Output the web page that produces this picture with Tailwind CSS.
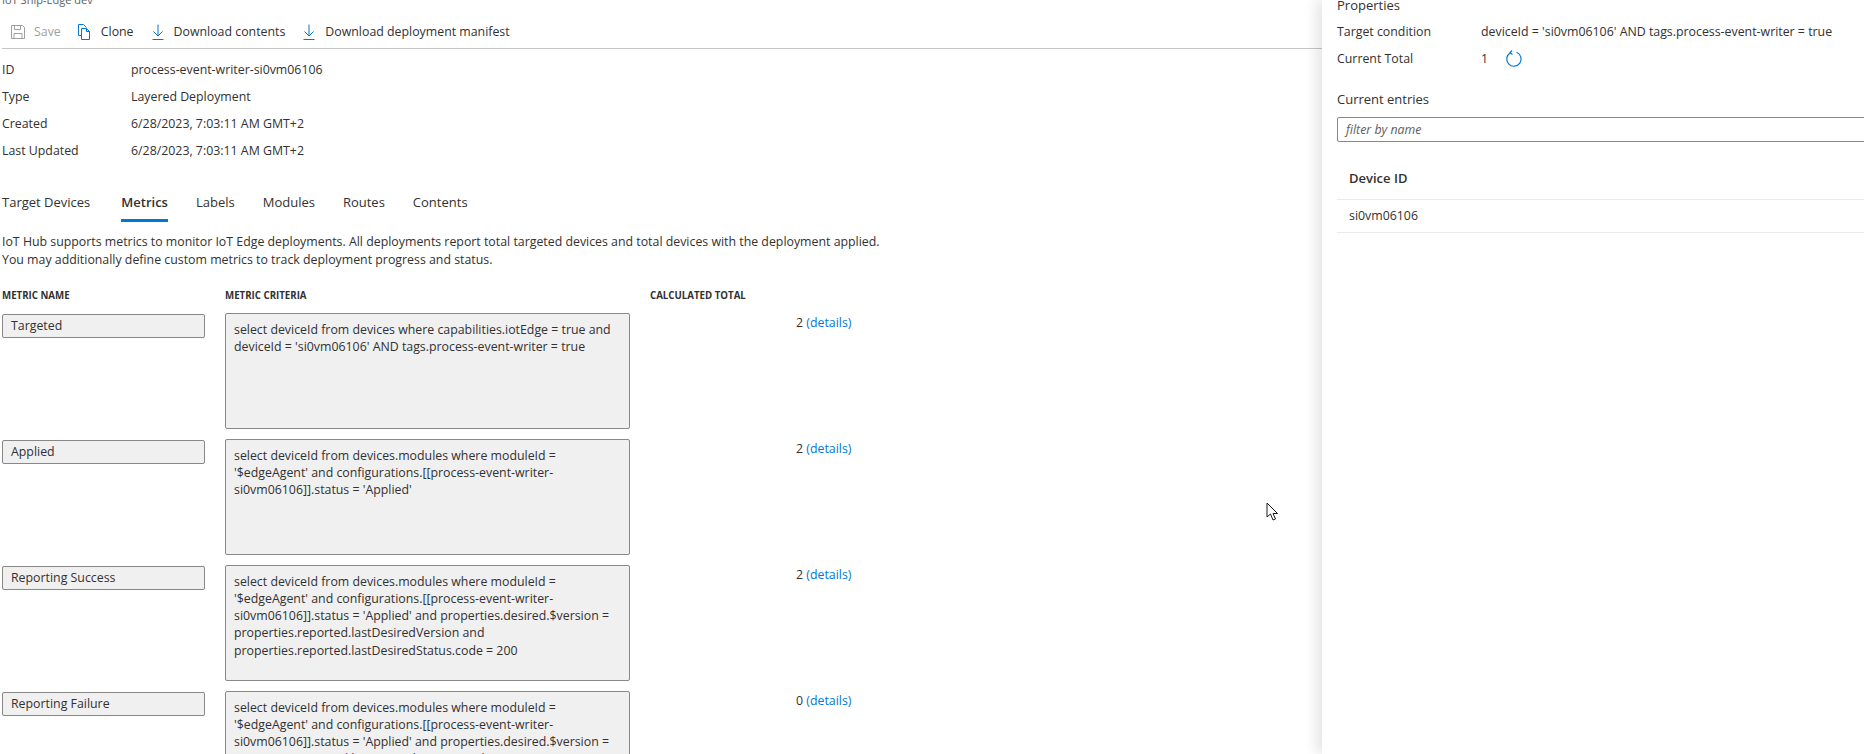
<!DOCTYPE html>
<html>
<head>
<meta charset="UTF-8">
<script src="https://cdn.jsdelivr.net/npm/@tailwindcss/browser@4"></script>
</head>
<body class="h-screen overflow-hidden bg-white text-[#323130] text-[12.35px] font-['Open_Sans','Noto_Sans',sans-serif]">
<div class="relative flex h-[754px] overflow-hidden">
  <!-- main blade -->
  <main class="w-[1322px] shrink-0">
    <div class="h-[12px] overflow-hidden pl-[2px] text-[11px] leading-[0px] text-[#605e5c]">IoT Ship-Edge dev</div>
    <!-- toolbar -->
    <div class="ml-[2px] flex h-[37px] items-center gap-[16px] border-b border-[#c8c6c4] pt-[5px]">
      <button class="flex items-center gap-[8px] pl-[8px] text-[#a19f9d]">
        <svg width="16" height="16" viewBox="0 0 16 16" fill="none" stroke="#a19f9d"><path d="M1.5 1.5h11l2 2v11h-13z"/><path d="M4.5 1.5v4h6v-4M4 14.5v-5h8v5"/></svg>
        Save
      </button>
      <button class="flex items-center gap-[8px]">
        <svg width="16" height="16" viewBox="0 0 16 16" fill="none" stroke="#0078d4"><path d="M1.5.5h5l3 3M1.5.5v11h3"/><path d="M4.5 4.5h5l3 3v8h-8zM9.5 4.5v3h3"/></svg>
        Clone
      </button>
      <button class="flex items-center gap-[8px]">
        <svg width="16" height="16" viewBox="0 0 16 16" fill="none" stroke="#0078d4"><path d="M8 .5v11M3.5 7.5 8 12l4.500-4.500M2.500 15.500h11"/></svg>
        Download contents
      </button>
      <button class="flex items-center gap-[8px]">
        <svg width="16" height="16" viewBox="0 0 16 16" fill="none" stroke="#0078d4"><path d="M8 .5v11M3.500 7.500 8 12l4.500-4.500M2.500 15.500h11"/></svg>
        Download deployment manifest
      </button>
    </div>

    <!-- essentials -->
    <dl class="mt-[7px] grid grid-cols-[129px_1fr] pl-[2px] leading-[27px]">
      <dt>ID</dt><dd>process-event-writer-si0vm06106</dd>
      <dt>Type</dt><dd>Layered Deployment</dd>
      <dt>Created</dt><dd>6/28/2023, 7:03:11 AM GMT+2</dd>
      <dt>Last Updated</dt><dd>6/28/2023, 7:03:11 AM GMT+2</dd>
    </dl>

    <!-- tabs -->
    <div class="mt-[29px] flex gap-[28px] pl-[2px] text-[13px]">
      <span class="mr-[3px] pb-[9px]">Target Devices</span>
      <span class="border-b-[3px] border-[#0078d4] pb-[6px] font-semibold">Metrics</span>
      <span>Labels</span>
      <span>Modules</span>
      <span>Routes</span>
      <span>Contents</span>
    </div>

    <p class="mt-[11px] pl-[2px] leading-[18px]">IoT Hub supports metrics to monitor IoT Edge deployments. All deployments report total targeted devices and total devices with the deployment applied.<br>You may additionally define custom metrics to track deployment progress and status.</p>

    <!-- metrics table -->
    <div class="mt-[20px] grid grid-cols-[223px_425px_1fr] pl-[2px] text-[9.7px] leading-[14px] font-bold">
      <div>METRIC NAME</div><div>METRIC CRITERIA</div><div>CALCULATED TOTAL</div>
    </div>
    <div class="mt-[10px] flex flex-col gap-[10px] pl-[2px]">
      <div class="grid grid-cols-[223px_405px_1fr]">
        <div class="mt-px h-[24px] w-[203px] rounded-[2px] border border-[#8a8886] bg-[#f0f0f0] pl-[8px] leading-[21px]">Targeted</div>
        <div class="h-[116px] rounded-[2px] border border-[#8a8886] bg-[#f0f0f0] px-[8px] pt-[7px] leading-[17.3px]">select deviceId from devices where capabilities.iotEdge = true and deviceId = 'si0vm06106' AND tags.process-event-writer = true</div>
        <div class="pl-[166px] pt-[1px]">2 <a class="text-[#0078d4]">(details)</a></div>
      </div>
      <div class="grid grid-cols-[223px_405px_1fr]">
        <div class="mt-px h-[24px] w-[203px] rounded-[2px] border border-[#8a8886] bg-[#f0f0f0] pl-[8px] leading-[21px]">Applied</div>
        <div class="h-[116px] rounded-[2px] border border-[#8a8886] bg-[#f0f0f0] px-[8px] pt-[7px] leading-[17.3px]">select deviceId from devices.modules where moduleId = '$edgeAgent' and configurations.[[process-event-writer-si0vm06106]].status = 'Applied'</div>
        <div class="pl-[166px] pt-[1px]">2 <a class="text-[#0078d4]">(details)</a></div>
      </div>
      <div class="grid grid-cols-[223px_405px_1fr]">
        <div class="mt-px h-[24px] w-[203px] rounded-[2px] border border-[#8a8886] bg-[#f0f0f0] pl-[8px] leading-[21px]">Reporting Success</div>
        <div class="h-[116px] rounded-[2px] border border-[#8a8886] bg-[#f0f0f0] px-[8px] pt-[7px] leading-[17.3px]">select deviceId from devices.modules where moduleId = '$edgeAgent' and configurations.[[process-event-writer-si0vm06106]].status = 'Applied' and properties.desired.$version = properties.reported.lastDesiredVersion and properties.reported.lastDesiredStatus.code = 200</div>
        <div class="pl-[166px] pt-[1px]">2 <a class="text-[#0078d4]">(details)</a></div>
      </div>
      <div class="grid grid-cols-[223px_405px_1fr]">
        <div class="mt-px h-[24px] w-[203px] rounded-[2px] border border-[#8a8886] bg-[#f0f0f0] pl-[8px] leading-[21px]">Reporting Failure</div>
        <div class="h-[116px] rounded-[2px] border border-[#8a8886] bg-[#f0f0f0] px-[8px] pt-[7px] leading-[17.3px]">select deviceId from devices.modules where moduleId = '$edgeAgent' and configurations.[[process-event-writer-si0vm06106]].status = 'Applied' and properties.desired.$version = properties.reported.lastDesiredVersion and properties.reported.lastDesiredStatus.code = 200</div>
        <div class="pl-[166px] pt-[1px]">0 <a class="text-[#0078d4]">(details)</a></div>
      </div>
    </div>
  </main>

  <!-- side panel -->
  <aside class="w-[542px] shrink-0 pl-[15px] shadow-[-6px_0_12px_rgba(0,0,0,0.1)]">
    <div class="-mt-[4px] text-[13px] leading-[18px]">Properties</div>
    <div class="mt-[4px] grid grid-cols-[144px_1fr] leading-[27px]">
      <div>Target condition</div><div>deviceId = 'si0vm06106' AND tags.process-event-writer = true</div>
      <div>Current Total</div>
      <div class="flex items-center gap-[17px]">1
        <svg width="18" height="18" viewBox="0 0 18 18" fill="none" stroke="#0078d4" stroke-width="1.200"><path d="M11.500 2.300A7.200 7.200 0 1 1 5.500 2.700"/><path d="M7 .5 5 2.800l2.500 1.800"/></svg>
      </div>
    </div>
    <div class="mt-[18px] text-[13px] leading-[18px]">Current entries</div>
    <div class="mt-[9px] h-[25px] w-[560px] rounded-[2px] border border-[#8a8886] pl-[8px] leading-[23px] text-[#605e5c] italic">filter by name</div>
    <div class="mt-[23px] flex h-[35px] items-start border-b border-[#edebe9] pl-[12px] text-[13px] leading-[26px] font-semibold">Device ID</div>
    <div class="flex h-[33px] items-center border-b border-[#edebe9] pl-[12px] pt-[1px]">si0vm06106</div>
  </aside>

  <!-- mouse pointer -->
  <svg class="absolute left-[1266px] top-[502px]" width="14" height="21" viewBox="0 0 14 21" fill="#fff" stroke="#1a1a1a"><path d="M1 1v14l3.500-3 2.500 6 2.500-1-2.500-5.500h4.500z"/></svg>
</div>
</body>
</html>
